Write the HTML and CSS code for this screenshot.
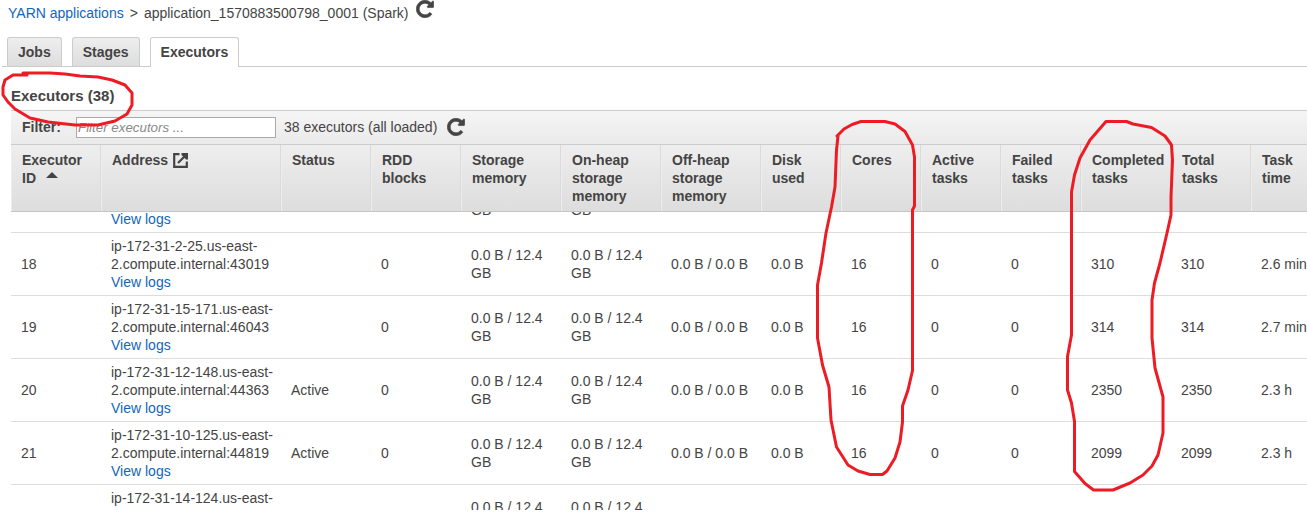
FILE: index.html
```html
<!DOCTYPE html>
<html lang="en">
<head>
<meta charset="utf-8">
<title>Spark executors</title>
<link rel="stylesheet" href="styles.css">
</head>
<body>
<svg width="0" height="0" class="defs"><symbol id="repeat" viewBox="98 98 1596 1596"><path d="M1664 256v448q0 26-19 45t-45 19h-448q-42 0-59-40-17-39 14-69l138-138q-148-137-349-137-104 0-198.500 40.500t-163.500 109.500-109.500 163.500-40.500 198.500 40.500 198.500 109.500 163.500 163.500 109.500 198.500 40.500q119 0 225-52t179-147q7-10 23-12 15 0 25 9l137 138q9 8 9.500 20.500t-7.500 22.500q-109 132-264 204.500t-327 72.500q-156 0-298-61t-245-164-164-245-61-298 61-298 164-245 245-164 298-61q147 0 284.500 55.500t244.500 156.500l130-129q29-31 70-14 39 17 39 59z"/></symbol></svg>
<nav class="crumbs">
  <a href="#">YARN applications</a><span class="sep">&gt;</span><span>application_1570883500798_0001 (Spark)</span>
  <svg class="refresh"><use href="#repeat"/></svg>
</nav>
<div class="tabs"><div class="tab">Jobs</div><div class="tab">Stages</div><div class="tab active">Executors</div></div>
<h1 class="title">Executors (38)</h1>
<main class="panel">
  <div class="filter">
    <label for="q">Filter:</label>
    <input id="q" type="text" placeholder="Filter executors ...">
    <span class="count">38 executors (all loaded)</span>
    <svg class="refresh"><use href="#repeat"/></svg>
  </div>
  <div class="row head">
    <div>Executor ID <i class="sort"></i></div>
    <div>Address <svg class="ext" viewBox="0 0 15 15"><path d="M6.500 1.200H1.200V13.800H13.800V8.500M5 10L12 3"/><path class="fill" d="M8.500 0H15v6.500h-2L8.500 2z"/></svg></div>
    <div>Status</div><div>RDD blocks</div><div>Storage memory</div><div>On-heap storage memory</div><div>Off-heap storage memory</div><div>Disk used</div><div>Cores</div><div>Active tasks</div><div>Failed tasks</div><div>Completed tasks</div><div>Total tasks</div><div>Task time</div>
  </div>
  <div class="viewport"><div class="rows">
    <div class="row"><div></div><div><br><br><a href="#">View logs</a></div><div></div><div></div><div><br>GB</div><div><br>GB</div><div></div><div></div><div></div><div></div><div></div><div></div><div></div><div></div></div>
    <div class="row"><div>18</div><div>ip-172-31-2-25.us-east-2.compute.internal:43019<br><a href="#">View logs</a></div><div></div><div>0</div><div>0.0 B / 12.4 GB</div><div>0.0 B / 12.4 GB</div><div>0.0 B / 0.0 B</div><div>0.0 B</div><div>16</div><div>0</div><div>0</div><div>310</div><div>310</div><div class="time">2.6 min</div></div>
    <div class="row"><div>19</div><div>ip-172-31-15-171.us-east-2.compute.internal:46043<br><a href="#">View logs</a></div><div></div><div>0</div><div>0.0 B / 12.4 GB</div><div>0.0 B / 12.4 GB</div><div>0.0 B / 0.0 B</div><div>0.0 B</div><div>16</div><div>0</div><div>0</div><div>314</div><div>314</div><div>2.7 min</div></div>
    <div class="row"><div>20</div><div>ip-172-31-12-148.us-east-2.compute.internal:44363<br><a href="#">View logs</a></div><div>Active</div><div>0</div><div>0.0 B / 12.4 GB</div><div>0.0 B / 12.4 GB</div><div>0.0 B / 0.0 B</div><div>0.0 B</div><div>16</div><div>0</div><div>0</div><div>2350</div><div>2350</div><div>2.3 h</div></div>
    <div class="row"><div>21</div><div>ip-172-31-10-125.us-east-2.compute.internal:44819<br><a href="#">View logs</a></div><div>Active</div><div>0</div><div>0.0 B / 12.4 GB</div><div>0.0 B / 12.4 GB</div><div>0.0 B / 0.0 B</div><div>0.0 B</div><div>16</div><div>0</div><div>0</div><div>2099</div><div>2099</div><div>2.3 h</div></div>
    <div class="row"><div></div><div>ip-172-31-14-124.us-east-<br><br><br></div><div></div><div></div><div>0.0 B / 12.4<br><br></div><div>0.0 B / 12.4<br><br></div><div></div><div></div><div></div><div></div><div></div><div></div><div></div><div></div></div>
  </div></div>
</main>
<svg class="marks" viewBox="0 0 1307 515">
  <path d="M27 75H13L5 80 3 87V95L8 102 15 109 30 118 48 122 75 125H98L115 121 127 114 132 105V93L125 85 112 80 98 77 80 76 65 74 50 73H23"/>
  <path d="M837 136L844 129 852 124.500 861 121.500H885L895 124 905 131.500 912.500 145 914.500 157V206L912.500 210V370.500L908 390 902.500 406V422L900 442 895 458 887 471 882.500 474.500H870L858 471 848 465 836.500 447 831 420 829 387 822.500 365 817.500 338V285L821.500 263 826 233 831.500 207 835 187 836.500 150 838 136"/>
  <path d="M1106 121.500H1126.500L1133 124 1151.500 127.500 1165 136 1171.500 145 1172.500 160 1171 197V215L1167 233 1160 263 1154.500 283 1152 300V338L1155 368 1163 397V433L1158 455 1152 466 1143 475 1130 483 1113 490H1093.500L1085 483.500 1074.500 471.500V421.500L1071.500 403 1067.500 390V356.500L1071.500 335V192L1074.500 175 1080 158 1090 140Z"/>
</svg>
</body>
</html>
```
FILE: styles.css
```css
* { box-sizing: border-box; }
body {
  margin: 0;
  width: 1307px;
  height: 515px;
  overflow: hidden;
  position: relative;
  background: #fff;
  color: #444;
  font: 14px/18px "Liberation Sans", Arial, sans-serif;
}
a { color: #1166bb; text-decoration: none; }
.defs { display: block; }
.crumbs { display: flex; height: 37px; padding: 4px 0 0 8px; }
.sep { margin: 0 6px; }
.refresh { width: 18px; height: 18px; fill: #444; stroke: #444; stroke-width: 60; }
.crumbs .refresh { margin: -4px 0 0 7px; }
.fill { fill: #444; stroke: none; }
.tabs {
  display: flex;
  gap: 10px;
  height: 30px;
  margin-left: 2px;
  padding-left: 5px;
  border-bottom: 1px solid #ccc;
}
.tab {
  height: 29px;
  padding: 5px 10px;
  border: 1px solid #ccc;
  border-bottom: 0;
  border-radius: 3px 3px 0 0;
  background: linear-gradient(#eee, #ddd);
  font-weight: bold;
}
.tab.active { height: 30px; background: #fff; }
.title { margin: 0; height: 43px; padding: 20px 0 0 11px; font-size: 15px; line-height: 18px; }
.panel { margin-left: 11px; overflow: hidden; }
.filter {
  display: flex;
  align-items: center;
  height: 34px;
  padding: 0 0 1px 11px;
  border-top: 1px solid #ccc;
  background: linear-gradient(#f5f5f5, #eaeaea);
}
.filter label { width: 54px; font-weight: bold; }
.filter input {
  width: 200px;
  height: 21px;
  padding: 0 1px;
  border: 1px solid #aaa;
  background: #fff;
  font: italic 13.33px "Liberation Sans", Arial, sans-serif;
}
.filter input::placeholder { color: #888; }
.count { margin: 0 10px 0 8px; }
.row {
  display: grid;
  grid-template-columns: 90px 180px 90px 90px 100px 100px 100px 80px 80px 80px 80px 90px 80px 80px;
  width: 1320px;
  height: 63px;
  align-items: center;
  border-bottom: 1px solid #ddd;
  overflow-wrap: anywhere;
}
.row > div { padding-left: 10px; padding-right: 6px; }
.row.head {
  height: 68px;
  align-items: stretch;
  border-top: 1px solid #ccc;
  border-bottom-color: #c4c4c4;
  background: linear-gradient(#eee, #ddd);
  font-weight: bold;
  overflow-wrap: normal;
}
.head > div {
  padding: 6px 5px 0 10px;
  border-left: 1px solid #eee;
  border-right: 1px solid #dadada;
}
.sort {
  display: inline-block;
  margin-left: 6px;
  border: 6px solid transparent;
  border-top: 0;
  border-bottom-color: #444;
  vertical-align: 5px;
}
.ext { width: 15px; height: 15px; vertical-align: -3px; margin-left: 1px; fill: none; stroke: #444; stroke-width: 2.200; }
.viewport { height: 298px; overflow: hidden; }
.rows { margin-top: -42px; }
.marks {
  position: absolute;
  inset: 0;
  width: 1307px;
  height: 515px;
  fill: none;
  stroke: #ed1c24;
  stroke-width: 3;
  stroke-linejoin: round;
  stroke-linecap: round;
  pointer-events: none;
}
```
